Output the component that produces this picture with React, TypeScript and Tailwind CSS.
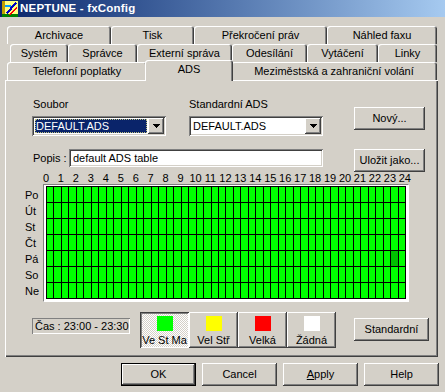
const raised =
  "shadow-[inset_-1px_-1px_0_0_#404040,inset_1px_1px_0_0_#ffffff,inset_-2px_-2px_0_0_#808080]";
const sunken =
  "shadow-[inset_1px_1px_0_0_#808080,inset_-1px_-1px_0_0_#ffffff,inset_2px_2px_0_0_#404040,inset_-2px_-2px_0_0_#d4d0c8]";
const tabShadow =
  "shadow-[inset_1px_1px_0_0_#ffffff,inset_-1px_0_0_0_#404040,inset_-2px_0_0_0_#808080]";

function Tab({ label, className }: { label: string; className: string }) {
  return (
    <div className={`h-[18px] flex items-center justify-center rounded-t-[3px] ${tabShadow} ${className}`}>
      {label}
    </div>
  );
}

function Arrow() {
  return (
    <svg width="7" height="4" viewBox="0 0 7 4" shapeRendering="crispEdges">
      <rect x="0" y="0" width="7" height="1" />
      <rect x="1" y="1" width="5" height="1" />
      <rect x="2" y="2" width="3" height="1" />
      <rect x="3" y="3" width="1" height="1" />
    </svg>
  );
}

function Combo({ value, focused }: { value: string; focused?: boolean }) {
  return (
    <div className={`h-[20px] w-[134px] bg-white flex p-[2px] ${sunken}`}>
      <div className="flex-1 p-px">
        <div
          className={
            focused
              ? "h-full bg-[#0a246a] text-white outline-1 outline-dotted outline-[#c0c080] -outline-offset-1 flex items-center pl-px"
              : "h-full flex items-center pl-px"
          }
        >
          {value}
        </div>
      </div>
      <div className={`w-[16px] h-[16px] bg-[#d4d0c8] flex items-center justify-center ${raised}`}>
        <Arrow />
      </div>
    </div>
  );
}

function Button({ children, className }: { children: React.ReactNode; className: string }) {
  return <div className={`h-[23px] flex items-center justify-center ${raised} ${className}`}>{children}</div>;
}

const days = ["Po", "Út", "St", "Čt", "Pá", "So", "Ne"];
const hours = Array.from({ length: 25 }, (_, i) => i);

const levels = [
  { label: "Ve St Ma", color: "bg-[#00ff00]", pressed: true },
  { label: "Vel Stř", color: "bg-[#ffff00]", pressed: false },
  { label: "Velká", color: "bg-[#ff0000]", pressed: false },
  { label: "Žádná", color: "bg-white", pressed: false },
];

function AppIcon() {
  return (
    <svg width="16" height="16" viewBox="0 0 16 16" shapeRendering="crispEdges">
      <rect x="0" y="0" width="16" height="16" fill="#ffff80" />
      <rect x="0" y="0" width="3" height="16" fill="#c0a000" />
      <rect x="0" y="13" width="16" height="3" fill="#008000" />
      <path d="M4 12 L13 1 L15 2 L6 13 Z" fill="#0000c0" />
      <path d="M6 14 L15 6 L15 8 L8 14 Z" fill="#ff0000" />
      <rect x="3" y="4" width="6" height="2" fill="#00a0ff" />
    </svg>
  );
}

export default function App() {
  return (
    <div className="w-[445px] h-[392px] bg-[#d4d0c8] overflow-hidden text-black text-[11px] leading-[13px] font-['Liberation_Sans',Arial,sans-serif]">
      {/* title bar */}
      <div className="h-[17px] bg-linear-to-r from-[#0a246a] to-[#a6caf0] flex items-center pl-[2px]">
        <AppIcon />
        <span className="ml-[2px] text-white font-bold text-[11.5px] tracking-[0.2px]">NEPTUNE - fxConfig</span>
      </div>

      {/* tab rows */}
      <div className="mt-[9px] flex h-[18px] ml-[7px]">
        <Tab label="Archivace" className="w-[104px]" />
        <Tab label="Tisk" className="w-[83px]" />
        <Tab label="Překročení práv" className="w-[133px]" />
        <Tab label="Náhled faxu" className="w-[110px]" />
      </div>
      <div className="flex h-[18px] ml-[10px]">
        <Tab label="Systém" className="w-[58px]" />
        <Tab label="Správce" className="w-[69px]" />
        <Tab label="Externí správa" className="w-[95px]" />
        <Tab label="Odesílání" className="w-[75px]" />
        <Tab label="Vytáčení" className="w-[71px]" />
        <Tab label="Linky" className="w-[59px]" />
      </div>
      <div className="flex h-[18px] ml-[7px] items-start">
        <Tab label="Telefonní poplatky" className="w-[140px]" />
        <div
          className={`relative z-10 -mx-[2px] -mt-[2px] h-[21px] w-[88px] bg-[#d4d0c8] flex items-center justify-center pb-[3px] rounded-t-[3px] ${tabShadow}`}
        >
          ADS
        </div>
        <Tab label="Meziměstská a zahraniční volání" className="w-[206px]" />
      </div>

      {/* panel */}
      <div className="ml-[5px] w-[433px] h-[277px] flex flex-col shadow-[inset_1px_1px_0_0_#ffffff,inset_-1px_-1px_0_0_#404040,inset_-2px_-2px_0_0_#808080]">
        <div className="flex pt-[18px]">
          <div className="ml-[27px] w-[291px] flex flex-col">
            <div className="flex">
              <div className="w-[134px]">
                <div className="h-[18px] pl-px">Soubor</div>
                <Combo value="DEFAULT.ADS" focused />
              </div>
              <div className="ml-[23px] w-[134px]">
                <div className="h-[18px]">Standardní ADS</div>
                <Combo value="DEFAULT.ADS" />
              </div>
            </div>
            <div className="mt-[13px] flex items-center h-[18px]">
              <div className="w-[37px] pl-px">Popis :</div>
              <div className={`w-[254px] h-[18px] bg-white flex items-center pl-[4px] ${sunken}`}>
                default ADS table
              </div>
            </div>
          </div>
          <div className="ml-[31px] flex flex-col">
            <Button className="mt-[9px] w-[71px]">Nový...</Button>
            <Button className="mt-[19px] w-[71px]">Uložit jako...</Button>
          </div>
        </div>

        {/* hours */}
        <div className="flex h-[12px] ml-[33.5px] leading-[12px]">
          {hours.map((h) => (
            <div key={h} className="w-[14.96px] shrink-0 text-center">
              {h}
            </div>
          ))}
        </div>

        {/* grid */}
        <div className="flex">
          <div className="ml-[20px] w-[18px] pt-[3px]">
            {days.map((d) => (
              <div key={d} className="h-[16px] leading-[16px]">
                {d}
              </div>
            ))}
          </div>
          <div className="border border-t-[#808080] border-l-[#808080] border-r-white border-b-white bg-white pt-px px-[2px] pb-[2px]">
            <div className="grid grid-cols-[repeat(48,1fr)] grid-rows-[repeat(7,15px)] gap-px bg-black p-px w-[360px] h-[113px]">
              {days.map((d, r) =>
                Array.from({ length: 48 }, (_, c) => (
                  <div key={d + c} className={r === 4 && c === 46 ? "bg-[#00c000]" : "bg-[#00ff00]"} />
                ))
              )}
            </div>
          </div>
        </div>

        {/* bottom row */}
        <div className="flex items-start mt-[10px]">
          <div className="ml-[27px] mt-[6px] w-[98px] h-[16px] flex items-center pl-[3px] whitespace-nowrap shadow-[inset_1px_1px_0_0_#808080,inset_-1px_-1px_0_0_#ffffff]">
            Čas : 23:00 - 23:30
          </div>
          <div className="ml-[10px] flex">
            {levels.map((l) => (
              <div
                key={l.label}
                className={
                  l.pressed
                    ? `w-[49px] h-[36px] flex flex-col items-center pt-[4px] bg-[image:repeating-conic-gradient(#ffffff_0_25%,#d4d0c8_0_50%)] bg-[length:2px_2px] shadow-[inset_1px_1px_0_0_#404040,inset_-1px_-1px_0_0_#ffffff,inset_2px_2px_0_0_#808080]`
                    : `w-[49px] h-[36px] flex flex-col items-center pt-[4px] ${raised}`
                }
              >
                <div className={`w-[16px] h-[15px] ${l.color}`} />
                <div className="mt-[3px] whitespace-nowrap">{l.label}</div>
              </div>
            ))}
          </div>
          <Button className="ml-[18px] mt-[6px] w-[75px]">Standardní</Button>
        </div>
      </div>

      {/* dialog buttons */}
      <div className="flex mt-[6px] ml-[121px] gap-[6px]">
        <div className="w-[75px] h-[23px] flex items-center justify-center shadow-[inset_0_0_0_1px_#000000,inset_-2px_-2px_0_0_#404040,inset_2px_2px_0_0_#ffffff,inset_-3px_-3px_0_0_#808080]">
          OK
        </div>
        <Button className="w-[75px]">Cancel</Button>
        <Button className="w-[75px]">
          <span>
            <span className="underline">A</span>pply
          </span>
        </Button>
        <Button className="w-[75px]">Help</Button>
      </div>
    </div>
  );
}
